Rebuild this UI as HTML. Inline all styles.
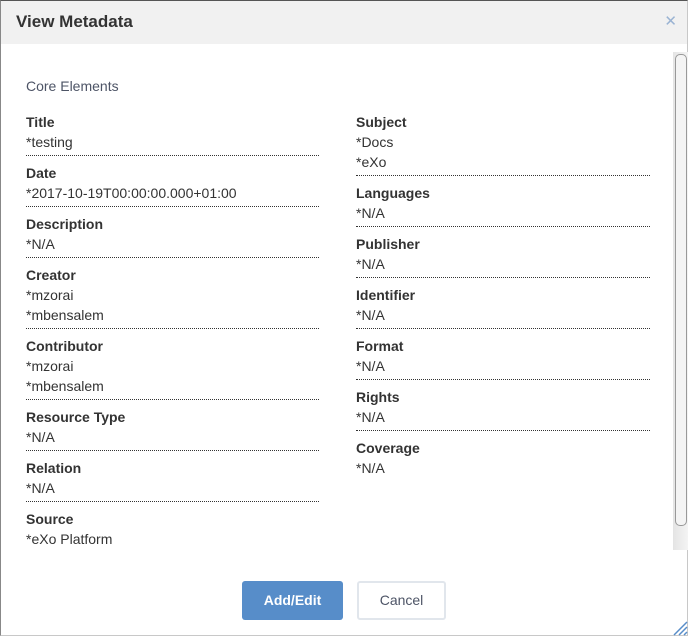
<!DOCTYPE html>
<html><head><style>
body{margin:0;width:689px;height:637px;overflow:hidden;background:#fff;font-family:"Liberation Sans",sans-serif;color:#333;font-size:14px;}
.dlg{position:absolute;left:0;top:0;width:688px;height:636px;border:1px solid #c8c8c8;border-top-color:#555;border-left-color:#888;box-sizing:border-box;}
.hdr{position:absolute;left:0;top:0;right:0;height:43px;background:#f1f1f1;}
.hdr h1{margin:0;position:absolute;left:15px;top:11px;font-size:17px;font-weight:bold;color:#333;}
.x{position:absolute;right:10px;top:11px;color:#9ab3d3;font-size:15px;}
.core{position:absolute;left:25px;top:77px;color:#4d5466;}
.col{position:absolute;top:111px;width:293px;}
.it{border-bottom:1px dotted #333;padding-bottom:3px;margin-bottom:7px;line-height:20px;}
.it.n{border-bottom:none;}
.it b{display:block;}
.sb{position:absolute;left:672px;top:51px;width:15px;height:498px;background:linear-gradient(90deg,#e4e4e4,#f4f4f4);}
.sb i{position:absolute;left:2px;top:2px;width:10px;height:470px;border:1px solid #999;border-radius:5px;background:#f4f4f4;}
.btn{position:absolute;top:580px;height:39px;line-height:39px;text-align:center;border-radius:3px;font-size:14px;box-sizing:border-box;}
</style></head><body>
<div class="dlg">
<div class="hdr"><h1>View Metadata</h1><span class="x">✕</span></div>
<div class="core">Core Elements</div>
<div class="col" style="left:25px">
<div class="it"><b>Title</b>*testing</div>
<div class="it"><b>Date</b>*2017-10-19T00:00:00.000+01:00</div>
<div class="it"><b>Description</b>*N/A</div>
<div class="it"><b>Creator</b>*mzorai<br>*mbensalem</div>
<div class="it"><b>Contributor</b>*mzorai<br>*mbensalem</div>
<div class="it"><b>Resource Type</b>*N/A</div>
<div class="it"><b>Relation</b>*N/A</div>
<div class="it n"><b>Source</b>*eXo Platform</div>
</div>
<div class="col" style="left:355px;width:294px">
<div class="it"><b>Subject</b>*Docs<br>*eXo</div>
<div class="it"><b>Languages</b>*N/A</div>
<div class="it"><b>Publisher</b>*N/A</div>
<div class="it"><b>Identifier</b>*N/A</div>
<div class="it"><b>Format</b>*N/A</div>
<div class="it"><b>Rights</b>*N/A</div>
<div class="it n"><b>Coverage</b>*N/A</div>
</div>
<div class="sb"><i></i></div>
<div class="btn" style="left:241px;width:101px;background:#578dc9;color:#fff;font-weight:bold;">Add/Edit</div>
<div class="btn" style="left:356px;width:89px;border:2px solid #e1e6ec;color:#4d5466;line-height:35px;">Cancel</div>
<svg style="position:absolute;left:671px;top:619px" width="16" height="16"><path d="M2 15L15 2M7 15L15 7M12 15L15 12" stroke="#578dc9" stroke-width="1.5"/></svg>
</div>
</body></html>
